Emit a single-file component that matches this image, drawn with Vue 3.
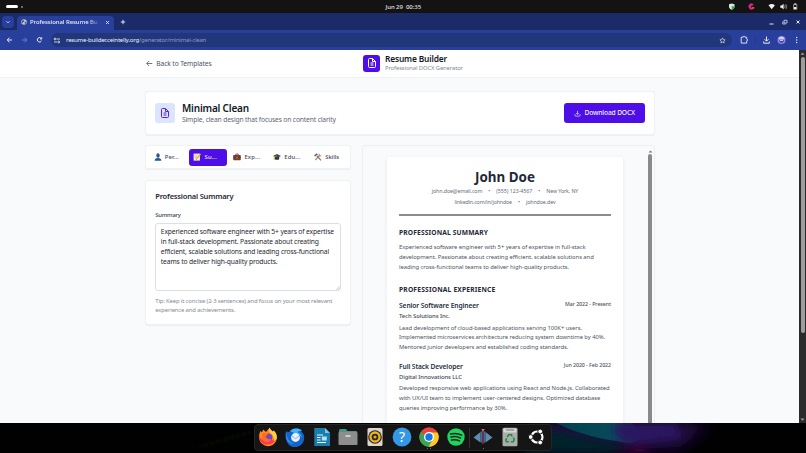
<script setup>
import { ref } from 'vue'

const activeTab = ref('summary')
const tabs = [
  { id: 'personal', label: 'Per...' },
  { id: 'summary', label: 'Su...' },
  { id: 'experience', label: 'Exp...' },
  { id: 'education', label: 'Edu...' },
  { id: 'skills', label: 'Skills' }
]

const summary = ref(`Experienced software engineer with 5+ years of expertise
in full-stack development. Passionate about creating
efficient, scalable solutions and leading cross-functional
teams to deliver high-quality products.`)

const jobs = [
  {
    title: 'Senior Software Engineer',
    company: 'Tech Solutions Inc.',
    date: 'Mar 2022 - Present',
    lines: [
      'Lead development of cloud-based applications serving 100K+ users.',
      'Implemented microservices architecture reducing system downtime by 40%.',
      'Mentored junior developers and established coding standards.'
    ]
  },
  {
    title: 'Full Stack Developer',
    company: 'Digital Innovations LLC',
    date: 'Jun 2020 - Feb 2022',
    lines: [
      'Developed responsive web applications using React and Node.js. Collaborated',
      'with UX/UI team to implement user-centered designs. Optimized database',
      'queries improving performance by 30%.'
    ]
  }
]
const apps = ['firefox', 'thunderbird', 'writer', 'files', 'rhythmbox', 'help', 'chrome', 'spotify', 'divider', 'editor', 'trash', 'ubuntu']
</script>

<template>
  <div class="desktop">
    <div class="topbar">
      <span class="workspace"></span>
      <span class="workspace-dot"></span>
      <span class="clock">Jun 29&nbsp; 00:35</span>
      <svg class="tray" width="76" height="13" viewBox="0 0 76 13">
        <path d="M2 4.2 4.7 3.4 7.5 4.2v2.6c0 1.400-1.200 2.300-2.800 3C3.100 9.100 2 8.200 2 6.800z" fill="#d9e8dc" />
        <path d="M4.500 6.200h3v.8c0 1.200-1.200 2.200-2.500 2.700z" fill="#3da35a" />
        <path d="M26.800 4.700A3 3 0 1 0 26.400 9L24.400 7.500a1 1 0 0 1 .2-1.600z" fill="#e3265f" />
        <path d="M22 4.800a3 3 0 0 1 3.500-1.100l-.7 2.200z" fill="#a826c4" />
        <rect x="25.200" y="7" width="2" height="1.800" fill="#f4504e" />
        <path d="M41.500 5.200q3.200-2.600 6.400 0L44.700 9.200z" fill="#f1f1f1" />
        <path d="M53.300 5.500h1.300l2-1.700v5.600l-2-1.700h-1.300z" fill="#f1f1f1" />
        <path d="M57.600 5.200q1 1.400 0 2.800M58.800 4.200q1.700 2.400 0 4.800" fill="none" stroke="#cfcfcf" stroke-width=".6" />
        <path d="M66.600 4.500h3.200v4.800h-3.200zM67.500 3.500h1.500v1h-1.500z" fill="none" stroke="#c9c9c9" stroke-width=".7" />
        <rect x="67" y="7" width="2.400" height="2" fill="#eee" />
      </svg>
    </div>

    <div class="tabstrip">
      <button class="tab-search">
        <svg width="6" height="6" viewBox="0 0 6 6"><path d="M1.500 2.300 3 3.800 4.500 2.300" fill="none" stroke="#dde4ff" stroke-width=".9" /></svg>
      </button>
      <div class="browser-tab">
        <svg width="6" height="6" viewBox="0 0 6 6">
          <circle cx="3" cy="3" r="2.800" fill="#bfc5d6" />
          <path d="M1 1.600 3 1.200 3.300 2.400 2 3.300 1.500 4.500 .5 3.300zM3.600 3.200 5.300 2.400 5.200 4 4 5.200z" fill="#4a537c" />
        </svg>
        <span class="tab-title">Professional Resume Bu</span>
        <svg class="tab-close" width="5" height="5" viewBox="0 0 5 5"><path d="m1 1 3 3M4 1 1 4" stroke="#eef1ff" stroke-width=".8" /></svg>
      </div>
      <svg class="new-tab" width="6" height="6" viewBox="0 0 6 6"><path d="M3 .8v4.400M.8 3h4.400" stroke="#eef1ff" stroke-width=".9" /></svg>
      <svg class="window-buttons" width="32" height="8" viewBox="0 0 32 8">
        <path d="M.5 6h4M27.500 2.500l3 3M30.500 2.500l-3 3" stroke="#dfe4fa" stroke-width="1" />
        <path d="M15 2.300h3v2.700h-3zM13.800 3.500v2.500h2.900" fill="none" stroke="#c5cdef" stroke-width=".9" />
      </svg>
    </div>

    <div class="toolbar">
      <svg class="nav" width="40" height="8" viewBox="0 0 40 8" fill="none" stroke-width=".95">
        <path d="M6 4H1.400M3.500 1.700 1.200 4l2.300 2.300" stroke="#eef1ff" />
        <path d="M16 4h4.700M18.500 1.700 20.800 4l-2.300 2.300" stroke="#6f80c8" />
        <path d="M35.300 2.500A2.200 2.200 0 1 0 35.500 4.800M35.700 1.300v1.700h-1.700" stroke="#eef1ff" />
      </svg>
      <div class="omnibox">
        <svg width="8" height="7" viewBox="0 0 8 7" fill="none" stroke="#d8dffb" stroke-width=".9">
          <path d="M3.500 2H7M1 5h3" /><circle cx="2" cy="2" r=".9" /><circle cx="5.700" cy="5" r=".9" />
        </svg>
        <span class="url"><b>resume-builder.ceintelly.org</b><i>/generator/minimal-clean</i></span>
        <svg class="star" width="7" height="7" viewBox="0 0 24 24"><path d="m12 3 2.700 6 6.300.7-4.700 4.300 1.300 6.500-5.600-3.300-5.600 3.300L7.700 14 3 9.700 9.300 9z" fill="none" stroke="#d5dcf6" stroke-width="2.400" /></svg>
      </div>
      <svg class="tools" width="68" height="14" viewBox="0 0 68 14" fill="none">
        <path d="M5.200 4.200h2c0-1.400 1.700-1.400 1.700 0h1.800v2c1.300 0 1.300 1.600 0 1.600v2.300H5.200z" stroke="#dce3ff" stroke-width=".95" />
        <path d="M19.500 4v6" stroke="#1f317f" stroke-width=".8" />
        <path d="M30.500 3.500v4.400M28.500 6.200l2 2 2-2M27.700 8.500v1.700h5.600V8.500" stroke="#eef1ff" stroke-width=".95" />
        <circle cx="45.500" cy="7" r="4" fill="#8f83e4" />
        <path d="M42.500 5q3-3 6 0l-1 1.200h-4z" fill="#c7d6fb" /><path d="M43.200 7h4.800l-1 2.500h-3z" fill="#4239a7" /><path d="M44 7.500h3" stroke="#dcb8ed" />
        <g fill="#eef1ff"><circle cx="60.700" cy="4.500" r=".65" /><circle cx="60.700" cy="7" r=".65" /><circle cx="60.700" cy="9.500" r=".65" /></g>
      </svg>
    </div>

    <div class="viewport">
      <div class="page">
        <header>
          <a class="back">
            <svg width="7" height="7" viewBox="0 0 7 7"><path d="M6.300 3.500H.9M3.200 1 .7 3.500 3.200 6" fill="none" stroke="#4b5563" stroke-width=".8" /></svg>
            <span>Back to Templates</span>
          </a>
          <div class="brand">
            <div class="logo">
              <svg width="12" height="12" viewBox="0 0 24 24" fill="none" stroke="#fff" stroke-width="2"><path d="M9 12h6m-6 4h6m2 5H7a2 2 0 0 1-2-2V5a2 2 0 0 1 2-2h5.600a1 1 0 0 1 .7.300l5.400 5.400a1 1 0 0 1 .3.700V19a2 2 0 0 1-2 2zM13 3v6h6" /></svg>
            </div>
            <div>
              <h1>Resume Builder</h1>
              <p>Professional DOCX Generator</p>
            </div>
          </div>
        </header>

        <main>
          <section class="card template-card">
            <div class="template-icon">
              <svg width="12" height="12" viewBox="0 0 24 24" fill="none" stroke="#5b21e6" stroke-width="2"><path d="M9 12h6m-6 4h6m2 5H7a2 2 0 0 1-2-2V5a2 2 0 0 1 2-2h5.600a1 1 0 0 1 .7.300l5.400 5.400a1 1 0 0 1 .3.700V19a2 2 0 0 1-2 2zM13 3v6h6" /></svg>
            </div>
            <div class="template-text">
              <h2>Minimal Clean</h2>
              <p>Simple, clean design that focuses on content clarity</p>
            </div>
            <button class="download">
              <svg width="7" height="7" viewBox="0 0 24 24" fill="none" stroke="#e9e3ff" stroke-width="2.400"><path d="M3 14v4a3 3 0 0 0 3 3h12a3 3 0 0 0 3-3v-4M7.500 10.500 12 15l4.500-4.500M12 3v12" /></svg>
              <span>Download DOCX</span>
            </button>
          </section>

          <div class="columns">
            <div class="left">
              <nav class="card tabs">
                <button v-for="tab in tabs" :key="tab.id" :class="['tab', tab.id, { active: activeTab === tab.id }]" @click="activeTab = tab.id">
                  <svg width="8" height="8" viewBox="0 0 8 8">
                    <template v-if="tab.id === 'personal'">
                      <ellipse cx="4" cy="2.500" rx="1.700" ry="2.200" fill="#24588c" />
                      <path d="M.7 7.700c0-2 1-2.800 3.300-2.800s3.300.8 3.300 2.800z" fill="#24588c" />
                    </template>
                    <template v-else-if="tab.id === 'summary'">
                      <rect x=".6" y=".6" width="6.300" height="7" fill="#f4f1e6" />
                      <path d="M1.500 2h3M1.500 3.300h2.500M1.500 4.600h2" stroke="#9ba6b5" stroke-width=".5" />
                      <path d="M7.500 1 3.700 5.700 3 7" stroke="#f2b600" stroke-width="1.300" fill="none" />
                    </template>
                    <template v-else-if="tab.id === 'experience'">
                      <path d="M2.800 2V1h2.400v1" fill="none" stroke="#4b3028" stroke-width=".7" />
                      <rect x=".2" y="2" width="7.600" height="5.300" rx=".7" fill="#7c4032" />
                      <path d="M.2 4.500h7.600" stroke="#4f281f" stroke-width=".5" /><rect x="3.400" y="4" width="1.200" height="1.200" fill="#d8a73b" />
                    </template>
                    <template v-else-if="tab.id === 'education'">
                      <path d="M1.800 3.500v2.700q2.200 1.300 4.400 0V3.500z" fill="#29323a" />
                      <path d="M0 2.900 4 1l4 1.900-4 2z" fill="#3c4850" />
                      <path d="M4 3 1.200 4v3" fill="none" stroke="#d6a63c" stroke-width=".7" />
                    </template>
                    <template v-else>
                      <path d="M1.200 7.200 6 2" stroke="#7297a8" stroke-width="1.200" /><path d="M5 .7 5.300 2.700 7.300 3" fill="none" stroke="#7297a8" stroke-width=".9" />
                      <path d="m3 3 4 4.400" stroke="#b76632" stroke-width="1.200" /><path d="M.6 3 3.300.8" stroke="#4b5b65" stroke-width="1.600" />
                    </template>
                  </svg>
                  <span>{{ tab.label }}</span>
                </button>
              </nav>

              <section class="card form">
                <h3>Professional Summary</h3>
                <label for="summary">Summary</label>
                <div class="field">
                  <textarea id="summary" v-model="summary" wrap="off" spellcheck="false"></textarea>
                  <svg class="grip" width="4" height="4" viewBox="0 0 4 4"><path d="M.3 3.700 3.700.3M2.200 3.700 3.700 2.200" stroke="#8b8f96" stroke-width=".5" /></svg>
                </div>
                <p class="tip">Tip: Keep it concise (2-3 sentences) and focus on your most relevant<br><span>experience and achievements.</span></p>
              </section>
            </div>

            <section class="card preview">
              <article class="paper">
                <div class="resume-head">
                  <h1>John Doe</h1>
                  <div class="contact">
                    <span class="mail">john.doe@email.com</span><em>•</em><span class="phone">(555) 123-4567</span><em>•</em><span>New York, NY</span>
                  </div>
                  <div class="contact">
                    <span class="linkedin">linkedin.com/in/johndoe</span><em>•</em><span>johndoe.dev</span>
                  </div>
                </div>
                <h2>PROFESSIONAL SUMMARY</h2>
                <p>
                  Experienced software engineer with 5+ years of expertise in full-stack<br>
                  development. Passionate about creating efficient, scalable solutions and<br>
                  leading cross-functional teams to deliver high-quality products.
                </p>
                <h2 class="experience-title">PROFESSIONAL EXPERIENCE</h2>
                <div v-for="job in jobs" :key="job.title" class="job">
                  <div class="job-head">
                    <h3>{{ job.title }}</h3>
                    <span class="date">{{ job.date }}</span>
                  </div>
                  <div class="company">{{ job.company }}</div>
                  <p><template v-for="line in job.lines" :key="line">{{ line }}<br></template></p>
                </div>
              </article>
              <div class="preview-scroll">
                <svg width="5" height="3" viewBox="0 0 5 3"><path d="M.5 2.600 2.500.4l2 2.200z" fill="#777" /></svg>
                <div></div>
              </div>
            </section>
          </div>
        </main>
      </div>
      <div class="scrollbar">
        <svg width="7" height="7" viewBox="0 0 7 7"><path d="M1.500 4.700 3.500 2.400l2 2.300z" fill="#a0a0a0" /></svg>
        <div class="thumb"></div>
        <svg width="7" height="7" viewBox="0 0 7 7"><path d="M1.500 2.400 3.500 4.700l2-2.300z" fill="#a0a0a0" /></svg>
      </div>
    </div>

    <div class="wallpaper">
      <svg class="aurora" width="806" height="30" viewBox="0 0 806 30">
        <defs>
          <linearGradient id="teal"><stop offset="0" stop-color="#02404a" /><stop offset=".7" stop-color="#084b5c" /><stop offset="1" stop-color="#231954" /></linearGradient>
          <filter id="soft" x="-20%" y="-50%" width="140%" height="200%"><feGaussianBlur stdDeviation="4" /></filter>
          <filter id="wide" x="-20%" y="-50%" width="140%" height="200%"><feGaussianBlur stdDeviation="8" /></filter>
        </defs>
        <path d="M530 0 710 0 680 24 620 26 530 22z" fill="#27114e" filter="url(#wide)" />
        <path d="M525 5 560 8 630 23 610 30 525 30z" fill="#06212b" filter="url(#soft)" />
        <path d="M556 0h76l10 14-10 6q-44-4-76-20z" fill="url(#teal)" />
        <path d="M614 0h60l8 14-48 7-18-6z" fill="#2b1260" filter="url(#soft)" />
        <path d="M615 30 640 23 655 30z" fill="#470b40" filter="url(#soft)" />
        <path d="M195 25q30-9 60-17" fill="none" stroke="#03160f" stroke-width="3" filter="url(#soft)" />
      </svg>
      <div class="dock">
        <template v-for="app in apps" :key="app">
          <i v-if="app === 'divider'" class="divider"></i>
          <div v-else class="app" :class="{ running: app === 'editor', windows: app === 'chrome' }">
            <svg width="20" height="20" viewBox="0 0 20 20">
              <template v-if="app === 'firefox'">
                <path d="M2.300 4 4 5.300 5.200 2.500 8 5 11.500.8q1 2.200 3.500 4l.7-1.300q4 4 3 9A9 9 0 0 1 1.200 12Q.5 8 2.300 4z" fill="#ff8a16" />
                <path d="M1 9q2 4 6 4.500 6 2 11.500-3.500A9 9 0 0 1 1.300 12z" fill="#fa3654" />
                <path d="M11.500.8q1 2.200 3.500 4l.7-1.300q3.500 3.500 3 8l-3 3q1-6-3-8-2.500-2-1.200-5.700z" fill="#ffd23c" />
                <circle cx="10.300" cy="10.500" r="4" fill="#7940c8" /><path d="M4 7q3-2 6 .5L7.500 9.500q2 3.500 6 2.500-2 4-6 3T4 7z" fill="#ff6a26" />
              </template>
              <template v-else-if="app === 'thunderbird'">
                <path d="M1 4.500 4 5Q7 .8 13 1.200l4 2-1 1q4 3 3 8A9 9 0 0 1 2 15Q-.5 10 1 4.500z" fill="#1565c9" />
                <path d="M5 4Q10-.5 17 3.200L12 5q4 1 5 6-2-4-8-5z" fill="#42b4fa" />
                <circle cx="10.500" cy="10.500" r="4.400" fill="#e9f3ff" /><path d="m6.800 8.700 3.700 3L14.200 8.700" fill="none" stroke="#7ab2ec" />
                <path d="M1 6q1 8 8 11-6 0-8-6z" fill="#2f91f0" />
              </template>
              <template v-else-if="app === 'writer'">
                <path d="M2.300 1H13l5 5v13H2.300z" fill="#1b7dae" /><path d="M13 1v5h5z" fill="#75c9e8" />
                <path d="M5 8h6M5 10.500h3.500M5 13h3.500M5 15.500h9" stroke="#e7f8ff" stroke-width="1.200" /><rect x="9.800" y="9.500" width="5" height="4" fill="#b5e2f2" />
              </template>
              <template v-else-if="app === 'files'">
                <path d="M1 3.500q0-1.500 1.500-1.500H8l1.500 2H18q1 0 1 1v10H1z" fill="#4d9486" /><rect x=".5" y="5" width="19" height="13" rx="1" fill="#8c8f8e" />
                <path d="M7.500 9h5" stroke="#eee" stroke-width="1.300" />
              </template>
              <template v-else-if="app === 'rhythmbox'">
                <rect x="2.500" y="1" width="15" height="18" rx="1.500" fill="#ddd6ce" /><circle cx="10" cy="10" r="6.800" fill="#292724" /><circle cx="10" cy="10" r="4.500" fill="none" stroke="#efb51c" stroke-width="2.300" /><circle cx="10" cy="10" r="1.600" fill="#eba80e" />
              </template>
              <template v-else-if="app === 'help'">
                <circle cx="10" cy="10" r="9.400" fill="#3498e5" /><text x="10" y="15" text-anchor="middle" class="question">?</text>
              </template>
              <template v-else-if="app === 'chrome'">
                <circle cx="10" cy="10" r="9.700" fill="#e84435" /><path d="M10 10 1.600 5.200A9.700 9.700 0 0 0 10 19.700l3.500-6z" fill="#35a756" /><path d="M10 5.500h8.600A9.700 9.700 0 0 1 9.500 19.700L14 12z" fill="#fccb24" /><circle cx="10" cy="10" r="5" fill="#fff" /><circle cx="10" cy="10" r="3.700" fill="#1a73e8" />
              </template>
              <template v-else-if="app === 'spotify'">
                <circle cx="10" cy="10" r="8.700" fill="#22d361" /><path d="M4.500 7q6-1.500 11.200 1.200M5 10q5-1.300 9.500 1M5.500 13q4.500-1 8 .9" fill="none" stroke="#11271a" stroke-width="1.500" stroke-linecap="round" />
              </template>
              <template v-else-if="app === 'editor'">
                <path d="M.5 10.500 7.500 5v10.500zM19.500 10.500l-7-5.500v10.500z" fill="#6389ae" /><path d="M7.500 4.500H9.300v12l-1.800-2zM10.700 4.500h1.800v10l-1.800 2z" fill="#466e99" /><path d="M10 4v13" stroke="#c43b49" stroke-width=".8" /><path d="M8.300 2h3.400L10 5z" fill="#ef6670" />
              </template>
              <template v-else-if="app === 'trash'">
                <rect x="2.500" y=".8" width="15" height="18.500" rx="1.500" fill="#aaaea9" /><rect x="3.500" y="1.500" width="13" height="4" rx=".7" fill="#d3d6d1" /><path d="M6 3h8" stroke="#777" />
                <path d="m7.200 10 1.500-2.200h2.600l1 1.500M13.300 10.500l1 2.500-1.200 1.700h-2.300M8.800 14.700H6.500L5.800 13l1-1.700" fill="none" stroke="#23894b" stroke-width="1.500" />
              </template>
              <template v-else>
                <circle cx="10" cy="10" r="5.500" fill="none" stroke="#fff" stroke-width="2.200" /><g fill="#fff" stroke="#151515"><circle cx="3.700" cy="10" r="2.400" /><circle cx="13.200" cy="4.500" r="2.400" /><circle cx="13.200" cy="15.500" r="2.400" /></g>
              </template>
            </svg>
          </div>
        </template>
      </div>
    </div>
  </div>
</template>

<style>
body {
  margin: 0;
  overflow: hidden;
  background: #000;
}
</style>

<style scoped>
* {
  box-sizing: border-box;
}
h1, h2, h3, p {
  margin: 0;
}
button {
  border: none;
  padding: 0;
  background: none;
  font: inherit;
}
svg {
  display: block;
  flex: none;
}
.desktop {
  width: 806px;
  height: 453px;
  display: flex;
  flex-direction: column;
  overflow: hidden;
  font-family: "Noto Sans", "Open Sans", sans-serif;
  font-size: 6px;
  white-space: nowrap;
}
.topbar {
  height: 13px;
  flex: none;
  display: flex;
  align-items: center;
  background: #131313;
  color: #e4e4e4;
}
.workspace {
  width: 12px;
  height: 3px;
  margin-left: 6px;
  border-radius: 2px;
  background: #fff;
}
.workspace-dot {
  width: 2px;
  height: 2px;
  margin-left: 3px;
  border-radius: 50%;
  background: #888;
}
.clock {
  margin-left: 362.500px;
  width: 40px;
  font-weight: 500;
  letter-spacing: -.05px;
}
.tray {
  margin-left: auto;
  margin-right: 3px;
}
.tabstrip {
  height: 17px;
  flex: none;
  display: flex;
  align-items: center;
  background: #1b2a68;
}
.tab-search {
  width: 12px;
  height: 12px;
  margin-left: 2px;
  display: flex;
  align-items: center;
  justify-content: center;
  border-radius: 4px;
  background: #283f9b;
}
.browser-tab {
  width: 97px;
  height: 14px;
  margin: 3px 0 0 3px;
  padding: 0 4px 2px 3.500px;
  display: flex;
  align-items: center;
  border-radius: 4px 4px 0 0;
  background: #283f9b;
}
.tab-title {
  width: 71px;
  margin-left: 3.500px;
  color: #e9edff;
  font-weight: 500;
  letter-spacing: -.07px;
  mask-image: linear-gradient(to right, #000 82%, transparent);
}
.tab-close {
  margin-left: auto;
}
.new-tab {
  margin-left: 5.500px;
}
.window-buttons {
  margin-left: auto;
  margin-right: 5px;
}
.toolbar {
  height: 20px;
  flex: none;
  display: flex;
  align-items: center;
  background: #283f9b;
}
.nav {
  margin-left: 5.500px;
}
.omnibox {
  width: 681px;
  height: 14px;
  margin-left: 5.500px;
  padding: 0 6px 0 2px;
  display: flex;
  align-items: center;
  border-radius: 7px;
  background: #21377a;
}
.url {
  margin-left: 5px;
}
.url b {
  color: #eef1ff;
  font-weight: 400;
  letter-spacing: -.188px;
}
.url i {
  color: #8e9bc9;
  font-style: normal;
  letter-spacing: -.224px;
}
.star {
  margin-left: auto;
}
.tools {
  margin-left: 4px;
}
.viewport {
  height: 373px;
  flex: none;
  display: flex;
}
.page {
  width: 799px;
  height: 373px;
  overflow: hidden;
  background: #f9fafc;
}
.scrollbar {
  width: 7px;
  display: flex;
  flex-direction: column;
  background: #2b2b2b;
}
.thumb {
  width: 4px;
  height: 276px;
  margin: 0 auto auto 2px;
  border-radius: 2px;
  background: #9d9d9d;
}
header {
  height: 28px;
  padding: 0 0 1px 145.500px;
  display: flex;
  align-items: center;
  border-bottom: 1px solid #eff1f4;
  background: #fff;
}
.back {
  width: 217.500px;
  display: flex;
  align-items: center;
  gap: 3.800px;
  color: #4b5563;
  font-size: 6.700px;
  letter-spacing: -.11px;
}
.brand {
  display: flex;
  align-items: center;
  gap: 5px;
}
.logo {
  width: 17px;
  height: 17px;
  display: flex;
  align-items: center;
  justify-content: center;
  border-radius: 3px;
  background: #4d0ee8;
}
.brand h1 {
  color: #111827;
  font-size: 8.400px;
  line-height: 10px;
  font-weight: 600;
  letter-spacing: -.16px;
}
.brand p {
  color: #858b96;
  font-size: 5.900px;
  line-height: 8px;
  letter-spacing: -.132px;
}
main {
  width: 510px;
  margin: 13px auto 0 145px;
}
.card {
  border: 1px solid #f0f2f4;
  border-radius: 3.500px;
  background: #fff;
  box-shadow: 0 .5px 1px rgba(0, 0, 0, .05);
}
.template-card {
  height: 44px;
  padding: 0 9px;
  display: flex;
  align-items: center;
}
.template-icon {
  width: 20px;
  height: 20px;
  display: flex;
  align-items: center;
  justify-content: center;
  border-radius: 3px;
  background: #dce5fd;
}
.template-text {
  margin-left: 7px;
}
.template-text h2 {
  color: #111827;
  font-size: 10px;
  line-height: 13px;
  font-weight: 600;
  letter-spacing: -.2px;
}
.template-text p {
  color: #5d6572;
  font-size: 6.700px;
  line-height: 10px;
  letter-spacing: -.136px;
}
.download {
  width: 81px;
  height: 20px;
  margin-left: auto;
  display: flex;
  align-items: center;
  justify-content: center;
  gap: 3.500px;
  border-radius: 3px;
  background: #4d0ee8;
  color: #f0ebff;
  font-size: 6.700px;
  font-weight: 500;
  letter-spacing: -.161px;
}
.download span {
  line-height: 8px;
  padding-bottom: 1px;
}
.columns {
  margin-top: 10px;
  display: flex;
  gap: 11px;
}
.left {
  width: 206px;
}
.tabs {
  height: 24px;
  padding: 0 3px;
  display: flex;
  align-items: center;
  gap: 1.500px;
}
.tab {
  width: 39px;
  height: 17px;
  display: flex;
  align-items: center;
  gap: 3.200px;
  padding-left: 4.500px;
  border-radius: 3px;
  color: #434b59;
  font-size: 5.900px;
  font-weight: 500;
  letter-spacing: .12px;
}
.tab.active {
  background: #4d0ee8;
  color: #efeaff;
}
.tab.skills {
  padding-left: 5.500px;
  letter-spacing: -.08px;
}
.form {
  height: 145px;
  margin-top: 11px;
  padding: 9.500px 9.300px;
}
.form h3 {
  color: #1f2937;
  font-size: 7.500px;
  line-height: 11px;
  font-weight: 600;
  letter-spacing: -.198px;
}
label {
  display: block;
  margin-top: 9.500px;
  color: #374151;
  font-size: 5.900px;
  line-height: 9px;
  font-weight: 500;
  letter-spacing: -.25px;
}
.field {
  position: relative;
  width: 186px;
  height: 68px;
  margin-top: 3px;
}
textarea {
  display: block;
  width: 100%;
  height: 100%;
  padding: 3px 4.500px;
  border: 1px solid #dcdfe4;
  border-radius: 3px;
  outline: none;
  overflow: hidden;
  resize: none;
  color: #24282f;
  font: 6.700px/10px "Noto Sans", "Open Sans", sans-serif;
  letter-spacing: -.117px;
  white-space: pre;
}
.grip {
  position: absolute;
  right: 1px;
  bottom: 1px;
}
.tip {
  margin-top: 6.200px;
  color: #858b96;
  font-size: 5.900px;
  line-height: 8.500px;
  letter-spacing: -.142px;
}
.preview {
  width: 293px;
  height: 300px;
  padding: 11px 0 0 24px;
  display: flex;
  background: #f9fafc;
  border: 1px solid #eef0f3;
}
.paper {
  width: 236px;
  height: 310px;
  padding: 12px;
  background: #fff;
  box-shadow: 0 1px 4px rgba(0, 0, 0, .07);
}
.preview-scroll {
  width: 5px;
  margin: -7.500px 0 0 24.500px;
}
.preview-scroll div {
  width: 4px;
  height: 300px;
  margin-top: 1.500px;
  border-radius: 2px;
  background: #898989;
}
.resume-head {
  padding-bottom: 7px;
  border-bottom: 2px solid #8a8c90;
  text-align: center;
}
.resume-head h1 {
  color: #1f2937;
  font-size: 13.400px;
  line-height: 16px;
  margin-bottom: 1px;
}
.contact {
  display: flex;
  justify-content: center;
  color: #666d79;
  font-size: 5.300px;
  line-height: 10.500px;
  letter-spacing: -.11px;
}
.contact .linkedin {
  letter-spacing: -.153px;
}
.contact .phone {
  letter-spacing: -.04px;
}
.contact em {
  width: 14px;
  font-style: normal;
}
.paper h2 {
  margin-top: 11.500px;
  color: #1f2937;
  font-size: 6.700px;
  line-height: 10px;
  letter-spacing: .127px;
}
.paper h2.experience-title {
  margin-top: 12px;
  letter-spacing: .18px;
}
.paper p {
  margin-top: 5.800px;
  color: #4d5563;
  font-size: 5.900px;
  line-height: 9.750px;
  letter-spacing: -.068px;
}
.job {
  margin-top: 6.700px;
}
.job + .job {
  margin-top: 9.200px;
}
.job .company + p {
  margin-top: 2.400px;
}
.job-head {
  display: flex;
  justify-content: space-between;
}
.job h3 {
  color: #27303e;
  font-size: 6.700px;
  line-height: 10px;
  font-weight: 600;
  letter-spacing: -.107px;
}
.date {
  color: #4d5563;
  font-size: 5.300px;
  line-height: 6px;
  font-weight: 500;
  letter-spacing: -.08px;
}
.company {
  color: #414957;
  font-size: 5.900px;
  line-height: 10px;
  font-weight: 500;
  letter-spacing: -.078px;
}
.wallpaper {
  position: relative;
  height: 30px;
  display: flex;
  justify-content: center;
  background: #010102;
}
.aurora {
  position: absolute;
  inset: 0;
}
.dock {
  position: relative;
  width: 298px;
  height: 27px;
  margin: 1px 1px 0 0;
  display: flex;
  align-items: center;
  border: 1px solid #252525;
  border-radius: 4px;
  background: #151515;
}
.app {
  position: relative;
  width: 26.900px;
  margin-bottom: 1px;
  display: flex;
  justify-content: center;
}
.running::after, .windows::after {
  content: '';
  position: absolute;
  bottom: -2px;
  width: 1.500px;
  height: 1.500px;
  border-radius: 50%;
  background: #4fa3a0;
}
.windows::after {
  margin-left: -3px;
  box-shadow: 3px 0 #4fa3a0;
}
.divider {
  width: 1px;
  height: 20px;
  background: #333;
}
.question {
  fill: #fff;
  font-size: 14px;
}
</style>
